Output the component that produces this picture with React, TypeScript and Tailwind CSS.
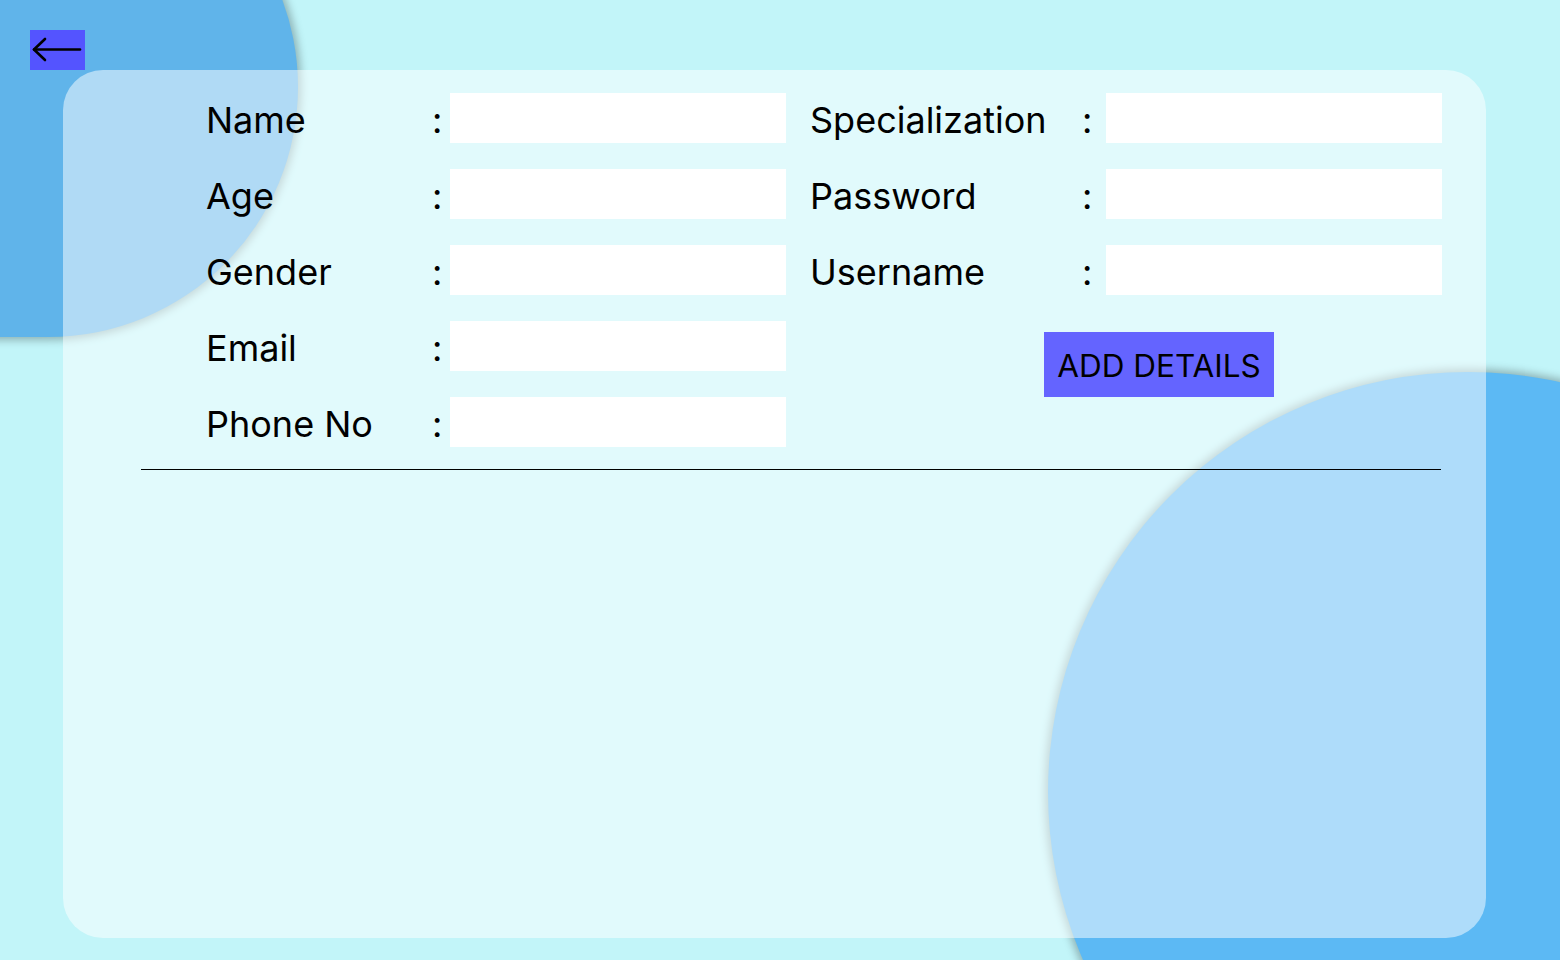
import React from "react";

const leftRows = ["Name", "Age", "Gender", "Email", "Phone No"];
const rightRows = ["Specialization", "Password", "Username"];

export default function App() {
  return (
    <div
      className="relative h-[960px] w-[1560px] overflow-hidden bg-[#c2f5f9] text-black"
      style={{ fontFamily: "Inter, 'Noto Sans', sans-serif" }}
    >
      {/* decorative blobs */}
      <div className="absolute left-[-298px] top-[-163px] h-[500px] w-[596px] rounded-full bg-[#60b4ea] shadow-[0_0_8px_3px_rgba(0,0,0,0.28)]" />
      <div className="absolute left-[1048px] top-[372px] h-[840px] w-[840px] rounded-full bg-[#5cb9f4] shadow-[0_0_8px_3px_rgba(0,0,0,0.28)]" />

      <div className="relative flex flex-col pl-[30px] pt-[30px]">
        <button className="flex h-[40px] w-[55px] items-center justify-center bg-[#5454ff]">
          <svg width="55" height="40" viewBox="0 0 55 40" fill="none">
            <path d="M4 19.5 H50" stroke="black" strokeWidth="2.6" strokeLinecap="round" />
            <path d="M15 9 L4 19.5 L15 30" stroke="black" strokeWidth="2.6" strokeLinecap="round" strokeLinejoin="round" />
          </svg>
        </button>

        <div className="ml-[33px] flex h-[868px] w-[1423px] flex-col rounded-[40px] bg-white/50 pl-[78px] pt-[23px]">
          <div className="flex">
            <div className="ml-[65px] flex flex-col gap-[26px]">
              {leftRows.map((l) => (
                <div key={l} className="flex h-[50px] items-center">
                  <span className="w-[226px] pt-[4px] text-[36px] leading-none">{l}</span>
                  <span className="w-[18px] pt-[4px] text-[36px] leading-none">:</span>
                  <div className="h-[50px] w-[336px] bg-white" />
                </div>
              ))}
            </div>
            <div className="ml-[24px] flex flex-col gap-[26px]">
              {rightRows.map((l) => (
                <div key={l} className="flex h-[50px] items-center">
                  <span className="w-[272px] pt-[4px] text-[36px] leading-none">{l}</span>
                  <span className="w-[24px] pt-[4px] text-[36px] leading-none">:</span>
                  <div className="h-[50px] w-[336px] bg-white" />
                </div>
              ))}
              <button className="ml-[234px] mt-[11px] flex h-[65px] w-[230px] items-center justify-center bg-[#6464ff] pt-[2px] text-[31.5px] leading-none text-black">
                ADD DETAILS
              </button>
            </div>
          </div>
          <div className="mt-[22px] h-[1px] w-[1300px] bg-black" />
        </div>
      </div>
    </div>
  );
}
